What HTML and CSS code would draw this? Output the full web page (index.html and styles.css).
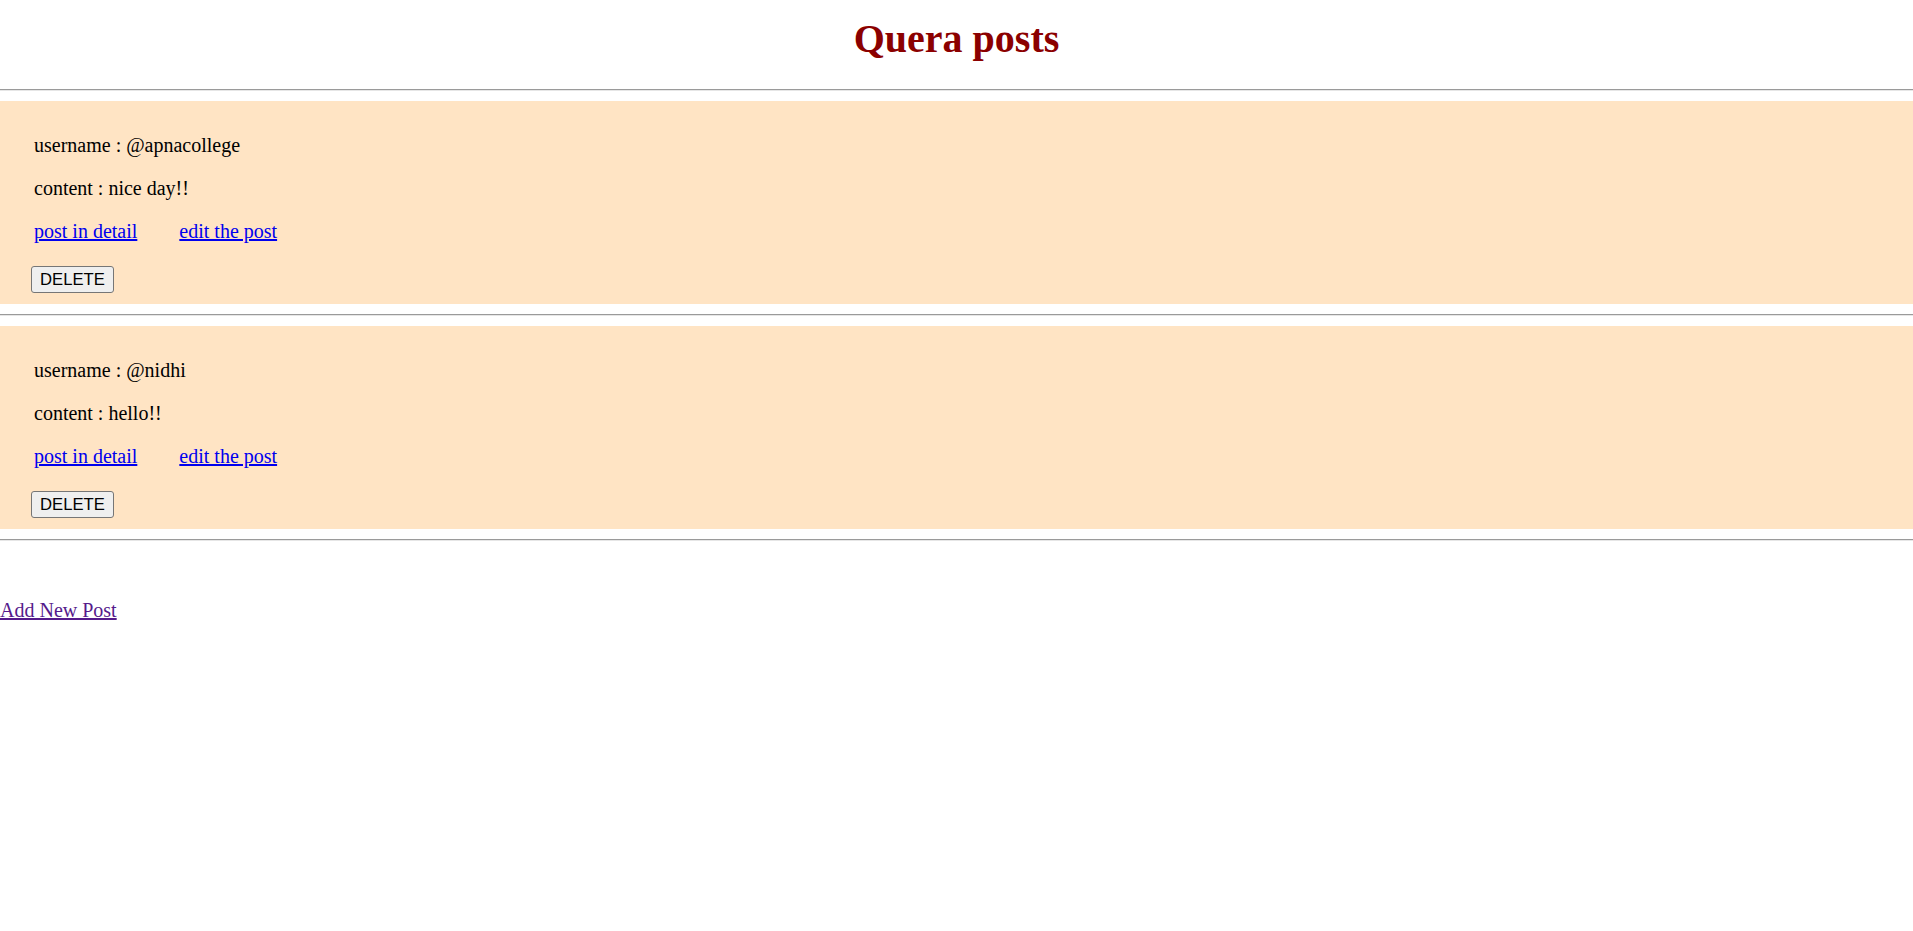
FILE: index.html
```html
<!DOCTYPE html>
<html>
<head>
<meta charset="utf-8">
<title>Quera posts</title>
<link rel="stylesheet" href="styles.css">
</head>
<body>
<h1 class="title">Quera posts</h1>
<hr class="rule">
<div class="post">
  <p class="line">username : @apnacollege</p>
  <p class="line">content : nice day!!</p>
  <div class="links"><a class="link" href="#a1">post in detail</a><a class="link edit" href="#e1">edit the post</a></div>
  <form class="del-form"><button class="del" type="button">DELETE</button></form>
</div>
<hr class="rule">
<div class="post">
  <p class="line">username : @nidhi</p>
  <p class="line">content : hello!!</p>
  <div class="links"><a class="link" href="#a2">post in detail</a><a class="link edit" href="#e2">edit the post</a></div>
  <form class="del-form"><button class="del" type="button">DELETE</button></form>
</div>
<hr class="rule">
<div class="new-wrap"><a class="new-link" href="#new">Add New Post</a></div>
</body>
</html>
```
FILE: styles.css
```css
html, body {
  margin: 0;
  padding: 0;
  background: #ffffff;
}
body {
  font-family: "Liberation Serif", "Times New Roman", serif;
  font-size: 20px;
  color: #000;
}
.title {
  font-size: 40px;
  font-weight: bold;
  color: #8b0000;
  text-align: center;
  margin: 16px 0 27px;
  line-height: 46px;
}
.rule {
  margin: 10px 0;
  border: 0;
  border-top: 1px solid #9a9a9a;
  border-bottom: 1px solid #e6e6e6;
  height: 0;
}
.post {
  background: #ffe4c4;
  padding: 13px 31px 11px;
}
.line {
  margin: 20px 0;
  padding-left: 3px;
  line-height: 23px;
}
.links {
  padding-left: 3px;
  line-height: 23px;
  margin-bottom: 23px;
}
.link {
  color: #0000ee;
}
.edit {
  margin-left: 42px;
}
.del-form {
  margin: 0;
  line-height: 0;
}
.del {
  font-family: "Liberation Sans", Arial, sans-serif;
  font-size: 16.67px;
  background: #efefef;
  border: 1px solid #767676;
  border-radius: 3px;
  padding: 1px 8px;
  height: 27px;
  color: #000;
  margin: 0;
  line-height: normal;
}
.new-wrap {
  padding-top: 48px;
  line-height: 23px;
}
.new-link {
  color: #551a8b;
}
```
